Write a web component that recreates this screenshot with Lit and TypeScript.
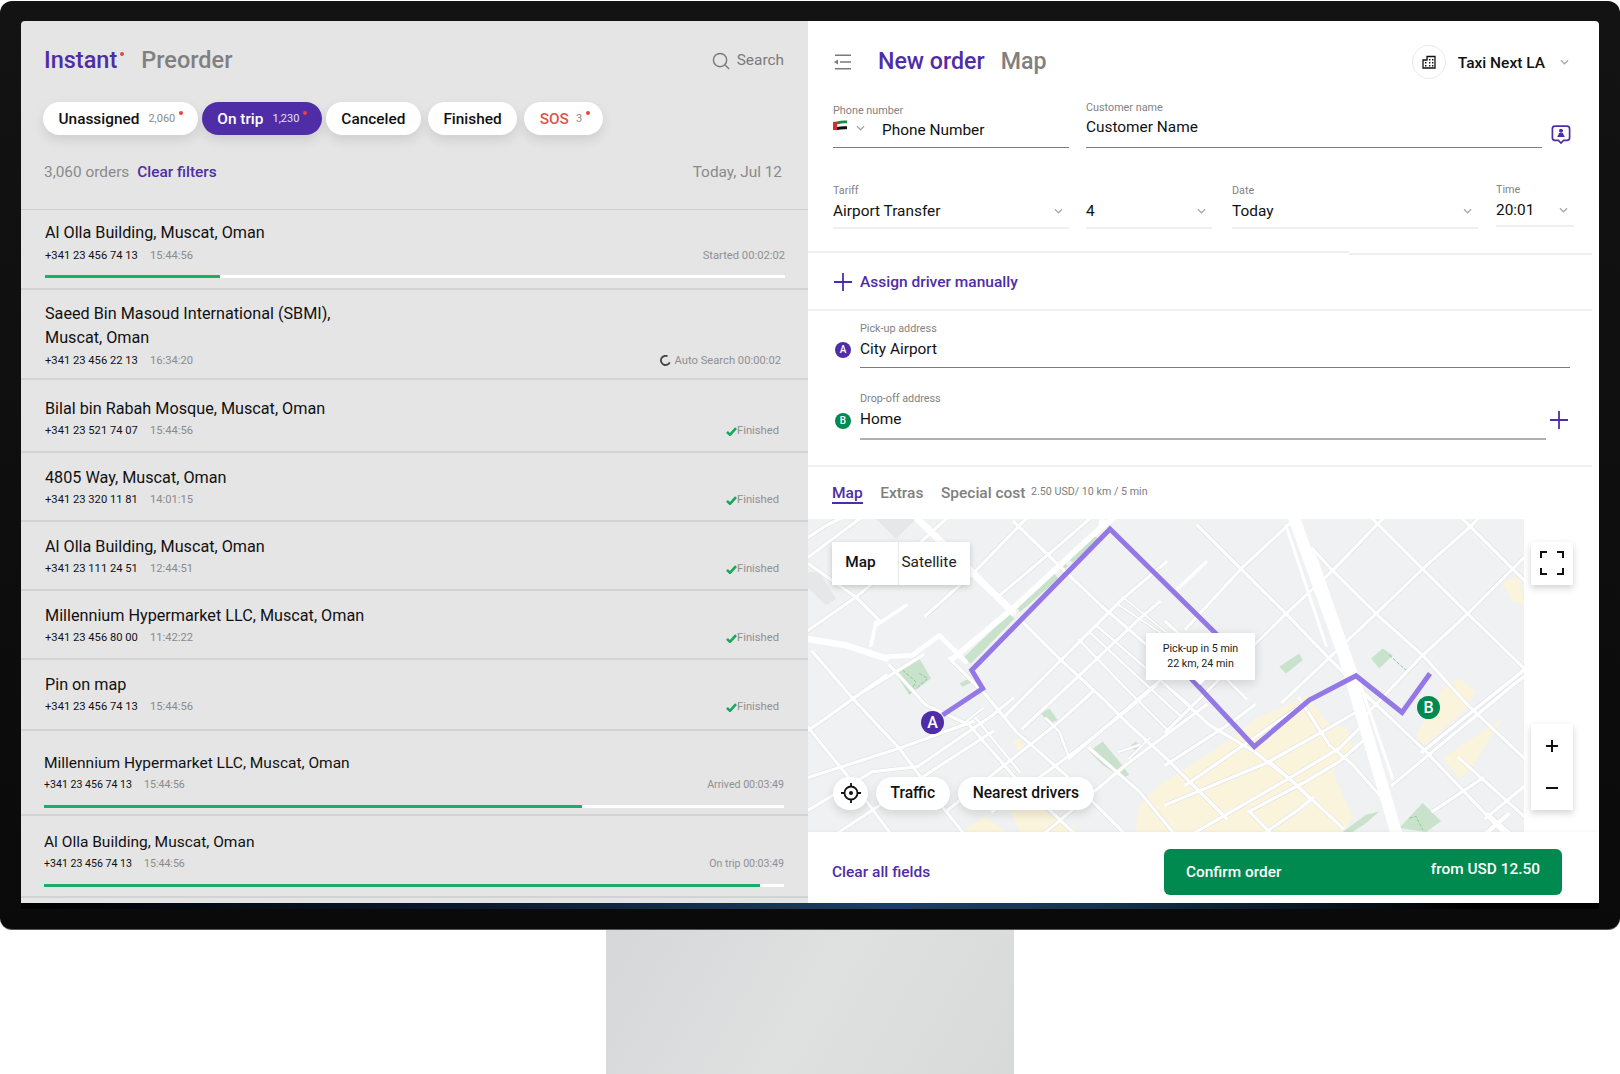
import { LitElement, html, css, svg } from "lit";
import { customElement } from "lit/decorators.js";

type Order = {
  title: string[];
  phone: string;
  time: string;
  status: string;
  kind: "plain" | "auto" | "done";
  height: number;
  top: number;
  bar?: number;
  compact?: boolean;
};

const ORDERS: Order[] = [
  { title: ["Al Olla Building, Muscat, Oman"], phone: "+341 23 456 74 13", time: "15:44:56", status: "Started 00:02:02", kind: "plain", height: 78, top: 11, bar: 23.6 },
  { title: ["Saeed Bin Masoud International (SBMI),", "Muscat, Oman"], phone: "+341 23 456 22 13", time: "16:34:20", status: "Auto Search 00:00:02", kind: "auto", height: 88, top: 12 },
  { title: ["Bilal bin Rabah Mosque, Muscat, Oman"], phone: "+341 23 521 74 07", time: "15:44:56", status: "Finished", kind: "done", height: 71, top: 17 },
  { title: ["4805 Way, Muscat, Oman"], phone: "+341 23 320 11 81", time: "14:01:15", status: "Finished", kind: "done", height: 67, top: 13 },
  { title: ["Al Olla Building, Muscat, Oman"], phone: "+341 23 111 24 51", time: "12:44:51", status: "Finished", kind: "done", height: 67, top: 13 },
  { title: ["Millennium Hypermarket LLC, Muscat, Oman"], phone: "+341 23 456 80 00", time: "11:42:22", status: "Finished", kind: "done", height: 67, top: 13 },
  { title: ["Pin on map"], phone: "+341 23 456 74 13", time: "15:44:56", status: "Finished", kind: "done", height: 69, top: 13 },
  { title: ["Millennium Hypermarket LLC, Muscat, Oman"], phone: "+341 23 456 74 13", time: "15:44:56", status: "Arrived 00:03:49", kind: "plain", height: 83, top: 21, bar: 72.7, compact: true },
  { title: ["Al Olla Building, Muscat, Oman"], phone: "+341 23 456 74 13", time: "15:44:56", status: "On trip 00:03:49", kind: "plain", height: 80, top: 15, bar: 96.8, compact: true },
];

const CHIPS = [
  { label: "Unassigned", count: "2,060", dot: true, cls: "" },
  { label: "On trip", count: "1,230", dot: true, cls: "active" },
  { label: "Canceled", count: "", dot: false, cls: "" },
  { label: "Finished", count: "", dot: false, cls: "" },
  { label: "SOS", count: "3", dot: true, cls: "sos" },
];

/* Map geometry, in units of 1/3 px. Each road is [width, x, y, x, y, ...]. */
const ROADS: number[][] = [
  [5, 0, 60, 60, 20, 100, 0], [5, 0, 120, 160, 0], [5, 0, 130, 150, 235, 220, 305],
  [5, 0, 340, 150, 235, 300, 110, 420, 0], [5, 360, 290, 500, 165, 640, 20, 660, 0],
  [5, 500, 160, 600, 250], [5, 625, 10, 790, 170, 885, 260, 1000, 360, 1080, 430], [5, 600, 590, 760, 430, 880, 310, 950, 240, 1080, 130],
  [5, 575, 235, 770, 70, 850, 0], [5, 650, 310, 760, 420, 890, 540, 970, 620, 1080, 720, 1260, 900],
  [1, 950, 235, 1080, 340], [1, 940, 260, 1060, 340], [3, 820, 365, 960, 510, 1090, 640],
  [3, 850, 340, 990, 470, 1120, 590], [3, 870, 320, 1010, 440, 1150, 560],
  [5, 650, 630, 810, 480, 1000, 300, 1060, 250], [5, 790, 720, 1080, 470, 1200, 380],
  [5, 45, 610, 240, 470], [5, 140, 540, 350, 410],
  [5, 0, 780, 280, 690, 500, 610], [5, 335, 745, 560, 590, 620, 540], [5, 0, 640, 45, 610],
  [5, 20, 400, 140, 540, 280, 690, 420, 880, 470, 942], [5, 250, 440, 360, 560, 490, 620, 620, 770, 800, 942],
  [5, 0, 620, 130, 780, 250, 942], [5, 430, 420, 540, 530, 630, 640, 790, 780, 950, 942],
  [3, 510, 600, 640, 760], [5, 0, 880, 200, 760, 335, 745], [5, 100, 942, 420, 730, 560, 640],
  [5, 420, 880, 760, 610, 860, 520], [5, 560, 880, 820, 690, 970, 570, 1050, 500],
  [5, 720, 942, 960, 740, 1200, 560], [5, 850, 690, 1000, 820, 1100, 942], [3, 720, 600, 760, 640, 790, 720],
  [2, 940, 700, 1000, 680], [2, 970, 720, 1030, 660], [2, 530, 570, 480, 610],
  [5, 1175, 20, 1305, 150, 1440, 285, 1560, 410, 1700, 550], [5, 1520, 90, 1580, 155, 1710, 285, 1850, 410, 1985, 560, 2160, 725],
  [5, 1670, 520, 1860, 700, 2090, 942], [5, 1700, 0, 1850, 150, 1985, 285, 2160, 455], [5, 1970, 0, 2120, 150, 2160, 190],
  [5, 1140, 330, 1305, 150, 1450, 15], [5, 1080, 640, 1440, 285, 1580, 155, 1710, 20, 1730, 0],
  [5, 1430, 550, 1710, 285, 1850, 150, 1985, 30, 2015, 0], [5, 1670, 600, 1850, 410, 1985, 285, 2120, 150, 2160, 110],
  [6, 1850, 700, 2010, 570, 2160, 450], [1, 1865, 712, 2025, 582, 2160, 470], [5, 1760, 800, 2120, 500, 2160, 470],
  [5, 1080, 740, 1280, 610, 1345, 560], [5, 1140, 800, 1400, 620, 1500, 550], [5, 1080, 860, 1380, 735, 1550, 640, 1670, 570],
  [5, 1170, 942, 1450, 780, 1600, 690, 1670, 620], [5, 1330, 880, 1500, 790, 1600, 730, 1680, 660], [5, 1380, 942, 1470, 880, 1520, 840],
  [5, 1080, 310, 1200, 420, 1320, 540], [5, 1080, 500, 1210, 620, 1345, 700, 1460, 790, 1610, 930], [5, 1480, 540, 1570, 680, 1640, 740, 1720, 830],
  [5, 1390, 730, 1460, 790], [5, 1450, 780, 1510, 840], [5, 1330, 880, 1390, 942],
  [5, 1960, 720, 2160, 900], [5, 1880, 880, 2030, 780], [5, 2040, 900, 2160, 800],
  [9, 2045, 890, 2105, 942], [9, 2105, 890, 2045, 942],
];

const THICK: number[][] = [
  [16, 335, 0, 620, 280], [12, 440, 420, 620, 270, 880, 30, 920, 0], [14, 0, 360, 120, 380, 240, 420],
  [9, 240, 415, 320, 410, 400, 350, 480, 430], [6, 210, 310, 195, 380], [5, 210, 320, 300, 260],
  [30, 1465, 0, 1610, 400, 1640, 500, 1770, 942], [4, 1440, 20, 1560, 380], [4, 1520, 90, 1670, 520, 1760, 780],
];

const GREEN: string[] = [
  "470,420 610,285 625,300 495,435", "630,265 745,165 757,180 642,280", "760,145 775,130 785,142 770,155",
  "785,120 860,50 880,60 800,130", "265,460 340,420 375,480 310,530", "460,495 490,480 500,490 470,505",
  "705,585 730,570 755,605 730,615", "850,700 890,670 940,730 970,770 950,780 890,740", "975,680 990,670 1000,690 985,695",
  "1420,445 1480,405 1490,425 1440,465", "1695,420 1730,390 1760,410 1720,450", "1780,930 1850,855 1905,910 1860,942",
  "1610,942 1680,890 1720,880 1680,915 1640,942",
];

const YELLOW: string[] = [
  "1280,660 1350,600 1420,570 1500,530 1560,610 1620,630 1640,680 1580,760 1640,900 1610,942 1080,942 1080,790",
  "1830,650 1910,510 1960,480 2010,520 1980,570 1880,660 1855,680", "1910,720 2030,640 2090,600 2050,660 1990,760 1960,780",
  "2090,190 2140,170 2155,260 2120,250", "620,670 640,660 660,690 640,700", "480,930 540,895 600,942 480,942",
  "610,870 700,870 820,942 640,942", "1000,860 1080,780 1080,942 990,942",
];

const GREY: string[] = ["210,0 330,0 270,60", "0,160 40,160 90,240 60,260 0,200", "1490,760 1540,730 1570,770 1520,800"];

const PATHS: string[] = ["290,455 330,490 310,525", "340,465 365,480 330,510", "1750,410 1800,455", "1810,900 1830,895 1850,935"];

const ROUTE =
  "410,590 530,510 497,455 912,30 1235,350 1155,480 1345,685 1510,545 1650,472 1788,582 1872,465";

const poly = (p: number[]) => p.slice(1).join(",");

const chevron = html`<svg class="chev" viewBox="0 0 10 6"><path d="M1 1l4 4 4-4" fill="none" stroke="currentColor" stroke-width="1.4"/></svg>`;
const plus = html`<svg class="plus" viewBox="0 0 18 18"><path d="M9 0v18M0 9h18" fill="none" stroke="currentColor" stroke-width="1.8"/></svg>`;
const check = html`<svg class="check" viewBox="0 0 11 9"><path d="M1 4.8l3 3L10 1.2" fill="none" stroke="currentColor" stroke-width="2.6"/></svg>`;
const spinner = html`<svg class="spin" viewBox="0 0 12 12"><path d="M8.2 1.4A5 5 0 1 0 10.6 8" fill="none" stroke="#444" stroke-width="2"/></svg>`;

@customElement("app-root")
export class AppRoot extends LitElement {
  static styles = css`
    :host { display: block; width: 1620px; height: 1074px; background: #fff; font-family: Roboto, "Liberation Sans", sans-serif; color: #111; overflow: hidden; }
    * { box-sizing: border-box; }
    .monitor { margin-top: 1px; height: 929px; background: linear-gradient(#131313, #0a0a0a); border-radius: 12px; padding: 20px 21px 0; border-bottom: 1px solid #555; }
    .screen { height: 882px; display: grid; grid-template-columns: 787px 791px; border-radius: 4px 4px 0 0; overflow: hidden; }
    .band { height: 6px; background: linear-gradient(90deg, #000 0%, #0b1b30 30%, #1b3f63 55%, #14344f 68%, #000 92%); }
    .stand { width: 408px; height: 144px; margin-left: 606px; background: linear-gradient(120deg, #d5d7d8, #dfe1e1 50%, #d8dada); }

    .left { background: #e5e5e6; display: flex; flex-direction: column; overflow: hidden; }
    .lhead { display: flex; align-items: center; height: 28px; margin-top: 25px; padding: 0 24px 0 23px; }
    .tab { font-size: 23.2px; font-weight: 500; line-height: 28px; color: #808080; }
    .lhead .tab { font-size: 23.5px; }
    .tab.on { color: #4f2da7; position: relative; }
    .instant { margin-right: 24px; }
    .tab .dot { position: absolute; right: -7px; top: 6px; }
    .dot { width: 4px; height: 4px; border-radius: 50%; background: #e8453c; display: block; }
    .search { margin-left: auto; display: flex; align-items: center; gap: 7px; font-size: 15.4px; color: #7a7a7a; margin-top: -1px; }
    .search svg { width: 18px; height: 18px; margin-top: 3px; }
    .chips { display: flex; margin-top: 28px; padding-left: 22px; gap: 5px; }
    .chip { position: relative; height: 33px; padding: 1px 15.5px 0; border-radius: 17px; background: #fff; display: flex; align-items: center; font-size: 15.4px; font-weight: 500; box-shadow: 0 5px 12px rgba(0,0,0,.1); }
    .chip:first-child { margin-right: -1px; }
    .chip:nth-child(3) { margin-left: -1px; }
    .chip:nth-child(n+4) { margin-left: 2px; }
    .chip .count { font-size: 11px; font-weight: 400; color: #8a8a8a; margin-left: 9px; margin-top: -2px; position: relative; margin-right: 7px; }
    .chip .count .dot { position: absolute; right: -8px; top: -1px; }
    .chip.active { background: #4f2da7; color: #fff; }
    .chip.active .count { color: #e6e0f5; }
    .chip.sos { color: #e0534a; }
    .chip.sos .count { margin-right: 5px; margin-left: 7px; }
    .filters { display: flex; align-items: center; height: 20px; margin-top: 27px; padding: 0 26px 0 23px; font-size: 15.4px; color: #8a8a8a; }
    .filters a { color: #4f2da7; font-weight: 500; margin-left: 8px; }
    .filters .day { margin-left: auto; }
    .list { margin-top: 27px; border-top: 1.5px solid #cfcfd0; }
    .row { border-bottom: 2px solid #d2d3d4; padding: 0 23px 0 24px; }
    .row.compact { padding-left: 23px; padding-right: 24px; }
    .row .t { font-size: 16.2px; line-height: 24px; }
    .row.compact .t { font-size: 15.5px; line-height: 22px; }
    .row .m { display: flex; align-items: center; height: 20px; font-size: 11.2px; }
    .row.done .m { margin-top: -1px; }
    .row.compact .m { font-size: 10.6px; }
    .row.compact .bar { margin-top: 11px; }
    .row .ts { color: #8a8a8a; margin-left: 12px; }
    .row .st { margin-left: auto; color: #8f8f8f; display: flex; align-items: center; }
    .row .st.auto { padding-right: 4px; }
    .row .st.done { padding-right: 6px; }
    .check { width: 11px; height: 9px; color: #17a85c; margin-top: 2px; }
    .spin { width: 11px; height: 11px; margin-right: 4px; }
    .bar { height: 3px; margin-top: 10px; background: #fff; }
    .bar i { display: block; height: 100%; background: #1cae68; }

    .right { background: #fff; display: flex; flex-direction: column; overflow: hidden; }
    .rhead { display: flex; align-items: center; height: 34px; margin-top: 24px; padding: 0 30px 0 26px; }
    .menu { width: 18px; height: 16px; margin-right: 26px; color: #7a7a7a; }
    .rhead .tab { margin-right: 16px; line-height: 30px; margin-top: -3px; }
    .company { margin-left: auto; display: flex; align-items: center; }
    .circle { width: 34px; height: 34px; border: 1px solid #e9e9e9; border-radius: 50%; display: grid; place-items: center; margin-right: 12px; }
    .circle svg { width: 14px; height: 14px; }
    .cname { font-size: 15.5px; font-weight: 500; margin-top: 2px; }
    .company .chev { margin-left: 15px; }
    .chev { width: 9px; height: 6px; color: #a9a9a9; flex: none; }
    .frow { display: flex; padding: 0 25px; margin-top: 21px; height: 48px; }
    .fld { display: flex; flex-direction: column; justify-content: flex-end; border-bottom: 1.5px solid #7c7c7c; }
    .lab { font-size: 10.8px; line-height: 14px; color: #828282; }
    .val { font-size: 15.4px; line-height: 24px; display: flex; align-items: center; }
    .phone { width: 236px; padding-bottom: 5px; margin-right: 17px; }
    .flag { width: 14px; height: 10px; margin-top: -10px; }
    .phone .chev { margin: -4px 17px 0 9px; }
    .cust { width: 456px; padding-bottom: 8px; }
    .pin { width: 20px; height: 19px; margin: 25px 0 0 9px; color: #4f2da7; }
    .frow2 { display: flex; padding: 0 25px; margin-top: 36px; height: 46px; }
    .sel { display: flex; flex-direction: column; border-bottom: 2px solid #efefef; }
    .sel .val { justify-content: space-between; padding-right: 6px; margin-top: 1px; }
    .w1 { width: 236px; margin-right: 17px; }
    .w2 { width: 126px; margin-right: 20px; }
    .w3 { width: 246px; margin-right: 18px; }
    .w4 { width: 78px; height: 44px; margin-top: -1px; }
    .split { display: flex; margin-top: 22px; height: 4px; }
    .split i { display: block; height: 2px; background: #efefef; }
    .split i:first-child { width: 541px; }
    .split i:last-child { width: 243px; margin-top: 2px; }
    .assign { display: flex; align-items: center; height: 53px; padding-left: 26px; gap: 8px; font-size: 15.5px; font-weight: 500; color: #4f2da7; margin-top: 1px; }
    .assign .plus { width: 18px; height: 18px; margin-top: -1px; }
    .rule { height: 2px; width: 784px; background: #f0f0f0; }
    .addr { display: flex; align-items: flex-start; padding-left: 27px; }
    .badge { width: 16px; height: 16px; border-radius: 50%; flex: none; color: #fff; font-size: 10px; font-weight: 500; display: grid; place-items: center; margin-right: 9px; }
    .badge.a { background: #4f2da7; margin-top: 31px; }
    .badge.b { background: #008a4f; margin-top: 21px; }
    .afld { display: flex; flex-direction: column; }
    .afld .val { margin-top: 1px; }
    .afld.one { width: 710px; height: 46px; border-bottom: 1.5px solid #7c7c7c; margin-top: 11px; }
    .afld.two { width: 686px; height: 48px; border-bottom: 2px solid #b0b0b0; }
    .addr2 { margin-top: 24px; }
    .addr .plus { width: 18px; height: 18px; color: #4f2da7; margin: 19px 0 0 4px; }
    .rule2 { margin-top: 25px; }
    .tabs { display: flex; align-items: baseline; height: 22px; margin-top: 15px; padding-left: 24px; font-size: 15.5px; color: #808080; font-weight: 500; }
    .tabs span { margin-right: 17.5px; line-height: 22px; }
    .tabs .on { color: #4f2da7; border-bottom: 2px solid #4f2da7; height: 22px; }
    .tabs small { font-size: 10.7px; font-weight: 400; color: #7e7e7e; margin-left: -12px; position: relative; top: -3px; }
    .mapwrap { display: flex; margin-top: 15px; height: 313px; }
    .map { position: relative; width: 716px; height: 313px; overflow: hidden; background: #f0f1f3; flex: none; }
    .map > svg { width: 716px; height: 313px; display: block; }
    .box { position: absolute; left: 24px; top: 23px; width: 138px; height: 43px; background: #fff; display: flex; box-shadow: 0 2px 6px rgba(0,0,0,.18); font-size: 15.4px; line-height: 41px; }
    .box b { font-weight: 500; width: 67px; text-align: center; border-right: 1px solid #e8e8e8; padding-right: 9px; }
    .box span { flex: 1; text-align: center; color: #222; padding-right: 11px; white-space: nowrap; }
    .mbot { position: absolute; left: 25px; bottom: 22px; display: flex; gap: 7.5px; height: 33px; }
    .pill { height: 33px; padding: 0 15px; border-radius: 17px; background: #fff; display: flex; align-items: center; font-size: 15.6px; font-weight: 500; box-shadow: 0 4px 10px rgba(0,0,0,.12); }
    .pill.loc { width: 35px; padding: 0; justify-content: center; }
    .pill.loc svg { width: 20px; height: 20px; }
    .mark { position: absolute; width: 23px; height: 23px; border-radius: 50%; color: #fff; font-size: 16px; font-weight: 500; display: grid; place-items: center; }
    .mark.a { left: 113px; top: 192px; background: #4f2da7; }
    .mark.b { left: 609px; top: 177px; background: #008a4f; }
    .tip { position: absolute; left: 338px; top: 114px; width: 109px; height: 47px; background: #fff; box-shadow: 0 3px 10px rgba(0,0,0,.14); font-size: 10.7px; line-height: 15px; text-align: center; padding-top: 8px; color: #222; }
    .tip::after { content: ""; position: absolute; left: 48px; bottom: -5px; border: 6px solid transparent; border-bottom: 0; border-top-color: #fff; }
    .side { flex: 1; display: flex; flex-direction: column; padding: 23px 0 22px 7px; }
    .ctl { width: 42px; background: #fff; box-shadow: 0 3px 7px rgba(0,0,0,.18); display: flex; flex-direction: column; align-items: center; justify-content: center; }
    .full { height: 43px; }
    .full svg { width: 24px; height: 24px; }
    .zoom { height: 86px; margin-top: auto; justify-content: space-between; padding: 16px 0; }
    .zoom svg { width: 12px; height: 12px; }
    .foot { position: relative; display: flex; align-items: center; height: 72px; padding: 0 37px 0 24px; box-shadow: 0 -1px 3px rgba(0,0,0,.04); }
    .clear { color: #4f2da7; font-size: 15.5px; font-weight: 500; margin-top: 9px; }
    .confirm { margin-left: auto; margin-top: 9px; width: 398px; height: 46px; border-radius: 6px; background: #008a4f; color: #fff; display: flex; justify-content: space-between; padding: 0 22px; font-size: 15.4px; font-weight: 500; line-height: 47px; }
    .confirm span:last-child { line-height: 41px; }
  `;

  private renderMap() {
    const all = [...ROADS, ...THICK];
    return html`<svg viewBox="6 0 2148 942" preserveAspectRatio="none">
      ${GREY.map((p) => svg`<polygon points=${p} fill="#e6e7e9"/>`)}
      ${YELLOW.map((p) => svg`<polygon points=${p} fill="#fbf4dc"/>`)}
      ${GREEN.map((p) => svg`<polygon points=${p} fill="#c9e2cb"/>`)}
      <g fill="none" stroke="#8cc79a" stroke-width="3" stroke-dasharray="10 5">
        ${PATHS.map((p) => svg`<polyline points=${p}/>`)}
      </g>
      <g fill="none" stroke="#dcdddf" stroke-linejoin="round">
        ${ROADS.map((r) => svg`<polyline points=${poly(r)} stroke-width=${r[0] + 8}/>`)}
      </g>
      <g fill="none" stroke="#fff" stroke-linejoin="round" stroke-linecap="round">
        ${all.map((r) => svg`<polyline points=${poly(r)} stroke-width=${r[0] + 5}/>`)}
        <polyline points="1200,130 1115,210" stroke-width="10"/>
        <circle cx="890" cy="12" r="12" fill="#fff" stroke="none"/>
      </g>
      <polyline points=${ROUTE} fill="none" stroke="#9478e6" stroke-width="15" stroke-linejoin="miter"/>
    </svg>`;
  }

  render() {
    return html`
      <div class="monitor">
        <div class="screen">
          <section class="left">
            <div class="lhead">
              <span class="tab on instant">Instant<i class="dot"></i></span>
              <span class="tab">Preorder</span>
              <div class="search">
                <svg viewBox="0 0 19 19"><circle cx="8.5" cy="8.5" r="7" fill="none" stroke="currentColor" stroke-width="1.5"/><path d="M13.5 13.5l4.5 4.5" stroke="currentColor" stroke-width="1.5"/></svg>
                Search
              </div>
            </div>
            <div class="chips">
              ${CHIPS.map((c) => html`<div class="chip ${c.cls}">${c.label}${c.count ? html`<span class="count">${c.count}${c.dot ? html`<i class="dot"></i>` : ""}</span>` : ""}</div>`)}
            </div>
            <div class="filters">3,060 orders <a>Clear filters</a><span class="day">Today, Jul 12</span></div>
            <div class="list">
              ${ORDERS.map((o) => html`
                <div class="row ${o.compact ? "compact" : ""} ${o.kind}" style="height:${o.height + 2}px;padding-top:${o.top}px">
                  ${o.title.map((l) => html`<div class="t">${l}</div>`)}
                  <div class="m"><span>${o.phone}</span><span class="ts">${o.time}</span>
                    <span class="st ${o.kind}">${o.kind === "auto" ? spinner : ""}${o.kind === "done" ? check : ""}${o.status}</span></div>
                  ${o.bar ? html`<div class="bar"><i style="width:${o.bar}%"></i></div>` : ""}
                </div>`)}
            </div>
          </section>
          <section class="right">
            <div class="rhead">
              <svg class="menu" viewBox="0 0 18 16"><path d="M1 1.2h16M6 8h11M1 14.8h16" stroke="currentColor" stroke-width="1.6" fill="none"/><path d="M0 8l4-2.6v5.2z" fill="currentColor"/></svg>
              <span class="tab on">New order</span>
              <span class="tab">Map</span>
              <div class="company">
                <div class="circle"><svg viewBox="0 0 14 14"><path d="M1 13V5h4V1.5h8V13z" fill="none" stroke="#111" stroke-width="1.3"/><path d="M7 4h1.4v1.4H7zM10 4h1.4v1.4H10zM7 7h1.4v1.4H7zM10 7h1.4v1.4H10zM3 7h1.4v1.4H3zM3 10h1.4v1.4H3zM7 10h1.4v1.4H7zM10 10h1.4v1.4H10z" fill="#111"/></svg></div>
                <span class="cname">Taxi Next LA</span>
                ${chevron}
              </div>
            </div>
            <div class="frow">
              <div class="fld phone">
                <div class="lab">Phone number</div>
                <div class="val">
                  <svg class="flag" viewBox="0 0 14 10"><path d="M4 1.5Q9 0 14 .5v3Q9 3 4 4.5z" fill="#1c8a3f"/><path d="M4 4.5Q9 3 14 3.5v3Q9 6 4 7.5z" fill="#fff"/><path d="M4 7Q9 5.8 14 6.3v3Q9 8.8 4 10z" fill="#111"/><path d="M0 2L4 1.5V10L0 10.5z" fill="#d32f2f"/></svg>
                  ${chevron}Phone Number
                </div>
              </div>
              <div class="fld cust">
                <div class="lab">Customer name</div>
                <div class="val">Customer Name</div>
              </div>
              <svg class="pin" viewBox="0 0 20 19"><path d="M4 1.2h12a2.6 2.6 0 0 1 2.6 2.6v9a2.6 2.6 0 0 1-2.6 2.6h-3.4L10 18l-2.6-2.6H4a2.6 2.6 0 0 1-2.6-2.6v-9A2.6 2.6 0 0 1 4 1.2z" fill="none" stroke="currentColor" stroke-width="1.7"/><circle cx="10" cy="5.8" r="2" fill="currentColor"/><path d="M6.2 12l2-4h3.6l2 4z" fill="currentColor"/></svg>
            </div>
            <div class="frow2">
              <div class="sel w1"><div class="lab">Tariff</div><div class="val">Airport Transfer ${chevron}</div></div>
              <div class="sel w2"><div class="lab">&nbsp;</div><div class="val">4 ${chevron}</div></div>
              <div class="sel w3"><div class="lab">Date</div><div class="val">Today ${chevron}</div></div>
              <div class="sel w4"><div class="lab">Time</div><div class="val">20:01 ${chevron}</div></div>
            </div>
            <div class="split"><i></i><i></i></div>
            <div class="assign">${plus}Assign driver manually</div>
            <div class="rule"></div>
            <div class="addr">
              <div class="badge a">A</div>
              <div class="afld one"><div class="lab">Pick-up address</div><div class="val">City Airport</div></div>
            </div>
            <div class="addr addr2">
              <div class="badge b">B</div>
              <div class="afld two"><div class="lab">Drop-off address</div><div class="val">Home</div></div>
              ${plus}
            </div>
            <div class="rule rule2"></div>
            <div class="tabs"><span class="on">Map</span><span>Extras</span><span>Special cost</span><small>2.50 USD/ 10 km / 5 min</small></div>
            <div class="mapwrap">
              <div class="map">
                ${this.renderMap()}
                <div class="box"><b>Map</b><span>Satellite</span></div>
                <div class="mark a">A</div>
                <div class="mark b">B</div>
                <div class="tip">Pick-up in 5 min<br />22 km, 24 min</div>
                <div class="mbot">
                  <div class="pill loc"><svg viewBox="0 0 20 20"><circle cx="10" cy="10" r="6.5" fill="none" stroke="#111" stroke-width="1.8"/><circle cx="10" cy="10" r="2" fill="#111"/><path d="M10 0v4M10 16v4M0 10h4M16 10h4" stroke="#111" stroke-width="1.8"/></svg></div>
                  <div class="pill">Traffic</div>
                  <div class="pill">Nearest drivers</div>
                </div>
              </div>
              <div class="side">
                <div class="ctl full"><svg viewBox="0 0 24 24"><path d="M1 7V1h6M17 1h6v6M23 17v6h-6M7 23H1v-6" fill="none" stroke="#111" stroke-width="2"/></svg></div>
                <div class="ctl zoom">
                  <svg viewBox="0 0 12 12"><path d="M6 0v12M0 6h12" stroke="#111" stroke-width="2"/></svg>
                  <svg viewBox="0 0 12 12"><path d="M0 6h12" stroke="#111" stroke-width="2"/></svg>
                </div>
              </div>
            </div>
            <div class="foot">
              <span class="clear">Clear all fields</span>
              <div class="confirm"><span>Confirm order</span><span>from USD 12.50</span></div>
            </div>
          </section>
        </div>
        <div class="band"></div>
      </div>
      <div class="stand"></div>
    `;
  }
}
